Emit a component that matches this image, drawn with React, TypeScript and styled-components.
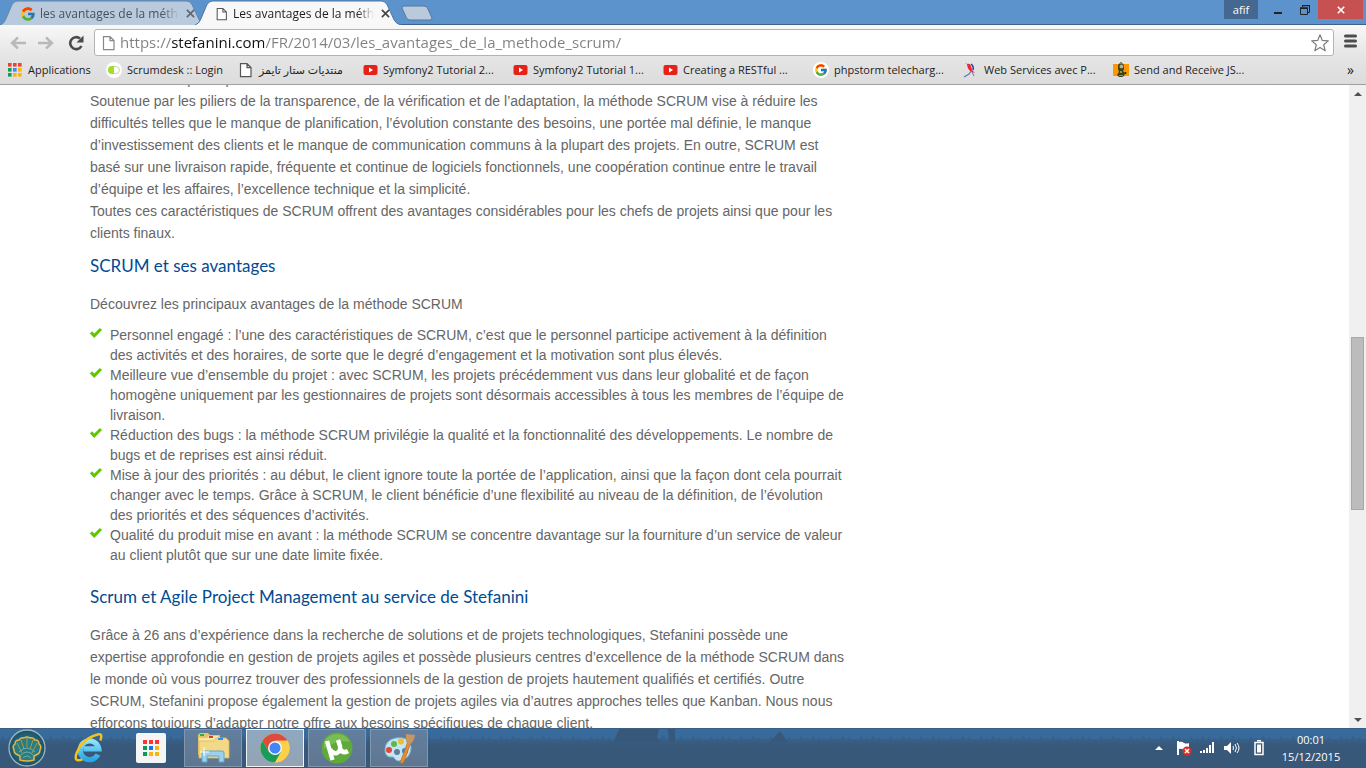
import React from 'react';
import styled, { createGlobalStyle, css } from 'styled-components';
import { FcGoogle } from 'react-icons/fc';

const GlobalStyle = createGlobalStyle`
  * { box-sizing: border-box; }
  html, body, #root { height: 100%; }
  body { margin: 0; overflow: hidden; background: #fff; }
  button { border: 0; padding: 0; background: none; font: inherit; color: inherit; }
`;

const uiFont = '"Open Sans", "Noto Sans", "DejaVu Sans", sans-serif';

const Desktop = styled.div`
  display: flex;
  flex-direction: column;
  height: 100vh;
  font-family: ${uiFont};
  font-size: 11px;
  color: #1c1c1c;
`;

/* ---------- Tab strip ---------- */

const TitleBar = styled.header`
  display: flex;
  justify-content: space-between;
  align-items: flex-start;
  height: 25px;
  background: #5d93cc;
  border-bottom: 1px solid #3d6189;
`;

const TabList = styled.nav`
  display: flex;
  height: 25px;
`;

const Tab = styled.div<{ $active?: boolean }>`
  position: relative;
  display: flex;
  align-items: center;
  gap: 4px;
  width: 206px;
  height: 25px;
  padding: 2px 11px 0 20px;
  margin-right: -11px;
  color: ${p => (p.$active ? '#1c1c1c' : '#46515e')};
  z-index: ${p => (p.$active ? 2 : 1)};
`;

const TabShape = styled.svg`
  position: absolute;
  inset: 0;
  width: 100%;
  height: 100%;
  z-index: -1;
`;

const TabTitle = styled.button`
  flex: 1;
  overflow: hidden;
  white-space: nowrap;
  text-align: left;
  font-size: 12px;
  line-height: 20px;
  mask-image: linear-gradient(90deg, #000 88%, transparent);
`;

const TabClose = styled.button`
  display: flex;
  width: 12px;
  height: 10px;
  justify-content: flex-end;
`;

const NewTab = styled.button`
  display: flex;
  margin: 5px 0 0 11px;
`;

const WindowControls = styled.div`
  display: flex;
  align-items: flex-start;
  padding-right: 3px;
`;

const UserBadge = styled.button`
  width: 34px;
  height: 19px;
  margin-right: 6px;
  background: #44688f;
  color: #fff;
  line-height: 18px;
`;

const WindowButton = styled.button<{ $close?: boolean }>`
  display: flex;
  align-items: center;
  justify-content: center;
  width: ${p => (p.$close ? 45 : 27)}px;
  height: 19px;
  background: ${p => (p.$close ? '#c75050' : 'transparent')};
`;

/* ---------- Toolbar and bookmarks ---------- */

const ChromeBars = styled.div`
  height: 60px;
  background: linear-gradient(#f8f8f8, #e6e6e6 50%, #dcdcdc);
  border-bottom: 1px solid #a0a0a0;
`;

const Toolbar = styled.div`
  display: flex;
  align-items: center;
  height: 33px;
  padding: 2px 9px 0 10px;
`;

const NavButton = styled.button`
  display: flex;
  width: 28px;
`;

const AddressBox = styled.label`
  display: flex;
  align-items: center;
  flex: 1;
  gap: 3px;
  height: 27px;
  margin-right: 10px;
  padding: 0 4px 0 6px;
  background: #fff;
  border: 1px solid #b3b3b3;
  border-radius: 3px;
`;

const AddressInput = styled.input`
  flex: 1;
  min-width: 0;
  height: 24px;
  padding: 0 0 2px;
  border: 0;
  outline: 0;
  font-family: ${uiFont};
  font-size: 15px;
  color: transparent;
  background: linear-gradient(90deg, #808080 51px, #111 51px, #111 144px, #808080 144px);
  background-clip: text;
  -webkit-background-clip: text;
`;

const BookmarkBar = styled.nav`
  display: flex;
  align-items: center;
  height: 24px;
  padding: 0 12px 0 7px;
`;

const Bookmark = styled.a<{ $width: number }>`
  display: flex;
  align-items: center;
  gap: 5px;
  width: ${p => p.$width}px;
  white-space: nowrap;
  line-height: 16px;
  color: inherit;
  text-decoration: none;
`;

const MoreBookmarks = styled.button`
  margin-left: auto;
  font-size: 14px;
  line-height: 16px;
`;

/* ---------- Page ---------- */

const Viewport = styled.div`
  display: flex;
  flex: 1;
  min-height: 0;
  background: #fff;
`;

const PageArea = styled.main`
  flex: 1;
  overflow: hidden;
  padding-left: 90px;
`;

const Article = styled.article`
  max-width: 756px;
  margin-top: -17px;
  font-family: "Liberation Sans", Arial, sans-serif;
  font-size: 14px;
  color: #666;
`;

const Paragraph = styled.p`
  margin: 0;
  line-height: 22px;
`;

const Heading = styled.h2<{ $afterList?: boolean }>`
  margin: ${p => (p.$afterList ? 20 : 10)}px 0 16px;
  font-family: Lato, "Open Sans", sans-serif;
  font-weight: 400;
  font-size: 17px;
  line-height: 23px;
  color: #004b93;
`;

const Benefits = styled.ul`
  list-style: none;
  margin: 10px 0 0;
  padding: 0;
  line-height: 20px;
`;

const Benefit = styled.li`
  display: flex;
  gap: 8px;
  svg { flex: none; margin-top: 2px; }
`;

const ScrollBar = styled.div`
  display: flex;
  flex-direction: column;
  width: 17px;
  padding: 0 2px;
  background: #f0f0f0;
`;

const ScrollArrow = styled.button`
  display: flex;
  align-items: center;
  justify-content: center;
  height: 17px;
`;

const TrackPart = styled.div<{ $share: number; $thumb?: boolean }>`
  flex: ${p => p.$share} 1 0;
  ${p => p.$thumb && css`
    background: #bcbcbc;
    border: 1px solid #a8a8a8;
  `}
`;

/* ---------- Taskbar ---------- */

const Taskbar = styled.footer`
  position: relative;
  display: flex;
  align-items: center;
  height: 40px;
  background: #375879;
  overflow: hidden;
`;

const Scenery = styled.svg`
  position: absolute;
  inset: 0;
  width: 100%;
  height: 100%;
`;

const Launchers = styled.div`
  position: relative;
  display: flex;
  gap: 4px;
`;

const Launcher = styled.button<{ $state?: 'open' | 'active' }>`
  display: flex;
  align-items: center;
  justify-content: center;
  width: 58px;
  height: 38px;
  border: 1px solid transparent;
  ${p => p.$state === 'open' && css`
    background: linear-gradient(#627f9f, #5f7690);
    border-color: #8297ad;
  `}
  ${p => p.$state === 'active' && css`
    background: linear-gradient(#8fa8c0, #94a3b4);
    border-color: #f0f3f6;
  `}
`;

const Start = styled(Launcher)`
  width: 54px;
  margin-right: 2px;
`;

const Tray = styled.div`
  position: relative;
  display: flex;
  align-items: center;
  margin-left: auto;
  padding-right: 25px;
`;

const TrayButton = styled.button<{ $width: number }>`
  display: flex;
  width: ${p => p.$width}px;
`;

const Clock = styled.time`
  display: flex;
  flex-direction: column;
  align-items: center;
  width: 60px;
  color: #fff;
  line-height: 17px;
`;

/* ---------- Drawings ---------- */

const PageIcon = ({ color = '#555', w = 16 }: { color?: string; w?: number }) => (
  <svg width={w} height="16" viewBox="0 0 16 16" fill="#fff" stroke={color} strokeWidth="1.2">
    <path d="M2.500 1.600h6.500l4 4v9H2.500zM9 1.600v4h4" />
  </svg>
);

const AppsIcon = () => {
  const fills = ['#ea4335', '#ea4335', '#ea4335', '#0f9d58', '#4285f4', '#fbb40a', '#0f9d58', '#fbb40a', '#fbb40a'];
  return (
    <svg width="16" height="14" viewBox="-1 0 16 14">
      {fills.map((f, i) => <rect key={i} x={(i % 3) * 5} y={Math.floor(i / 3) * 5} width="3.6" height="3.6" fill={f} />)}
    </svg>
  );
};

const ScrumdeskIcon = () => (
  <svg width="16" height="16" viewBox="0 0 16 16">
    <circle cx="8" cy="8" r="8" fill="#fff" />
    <rect x="2.5" y="4.5" width="11" height="7" rx="3.5" fill="#fff" stroke="#c6d8a0" />
    <path d="M8 4H6a4 4 0 0 0 0 8h2z" fill="#a4dd2b" />
  </svg>
);

const VideoIcon = () => (
  <svg width="15" height="16" viewBox="0 0 15 16">
    <rect x="0.5" y="3" width="14" height="10" rx="2" fill="#e62117" />
    <path d="M6 5.5v5L10 8z" fill="#fff" />
  </svg>
);

const SearchIcon = () => (
  <svg width="16" height="16" viewBox="0 0 16 16">
    <circle cx="8" cy="8" r="8" fill="#fff" />
    <FcGoogle x="1" y="1" width="14" height="14" size={14} />
  </svg>
);

const DancerIcon = () => (
  <svg width="16" height="16" viewBox="0 0 16 16" fill="none">
    <path d="M2 1l4 2" stroke="#b9bce0" />
    <path d="M1 15l5-3 3-4" stroke="#6a70b8" strokeWidth="1.200" />
    <path d="M4 2q3-1 4 2l1 4 3 3-3-1-3-2q-2-3-2-6z" fill="#f0262a" />
    <path d="M8 2q3 2 2 6" stroke="#283a9c" strokeWidth="1.500" />
    <path d="M9 10l2 4" stroke="#6a70b8" />
  </svg>
);

const RobotIcon = () => (
  <svg width="16" height="16" viewBox="0 0 16 16">
    <path d="M0 2h16v12H0z" fill="#ff9800" />
    <path d="M8 0l3 3v4l-1 2 2 2-1 3-2 1H6l-2-2 2-3-1-3V3z" fill="#39401c" />
    <circle cx="8.5" cy="4.5" r="2" fill="#a6b39a" />
    <path d="M7 9h2v2H7zM6 13h4v1H6z" fill="#8aa044" />
    <path d="M8 0l2 2H6z" fill="#5d9c2b" />
    <circle cx="12.500" cy="11" r="1" fill="#222" />
  </svg>
);

const Cross = ({ size, color, width }: { size: number; color: string; width: number }) => (
  <svg width={size} height={size} viewBox="0 0 10 10" stroke={color} strokeWidth={width}>
    <path d="M1 1l8 8M9 1L1 9" />
  </svg>
);

const CheckIcon = () => (
  <svg width="12" height="12" viewBox="0 0 12 12" fill="none" stroke="#5fc700" strokeWidth="3">
    <path d="M1 5.400l3.200 3.400L11 2" />
  </svg>
);

const TabBackground = ({ active }: { active?: boolean }) => (
  <TabShape viewBox="0 0 210 25" preserveAspectRatio="none" aria-hidden="true">
    <path
      d="M0 25Q4 24 6 19L12 5Q14 1 18 1H190Q194 1 196 5L203 20Q205 24 210 25Z"
      fill={active ? '#f8f8f8' : '#b9cadd'}
    />
    <path
      d="M0 25Q4 24 6 19L12 5Q14 1 18 1H190Q194 1 196 5L203 20Q205 24 210 25"
      fill="none"
      stroke={active ? '#4c76a3' : '#6485a9'}
    />
  </TabShape>
);

const ShellIcon = () => (
  <svg width="38" height="38" viewBox="0 0 38 38">
    <defs>
      <radialGradient id="orb"><stop offset="0" stopColor="#2f8f98" /><stop offset="1" stopColor="#1d4f68" /></radialGradient>
    </defs>
    <circle cx="19" cy="19" r="18" fill="url(#orb)" stroke="#9db5bd" strokeWidth="1.3" />
    <path
      d="M12 31v-4l-4-2q-2-1-2-4-2-4 1-6 0-4 4-4 2-3 5-2 3-2 6 0 3-1 5 2 4 0 4 4 3 2 1 6 0 3-2 4l-4 2v4q-7 2-14 0z"
      fill="#2b7c80" stroke="#e9b544" strokeWidth="1.500"
    />
    <path d="M14 24L9 14M16 20l-3-9M19 18V9M22 20l3-9M24 24l5-10" stroke="#c8a14a" strokeWidth="0.8" />
    <path d="M13 26q6-6 12 0M11 23q8-8 16 0M15 29q4-4 8 0" fill="none" stroke="#7fb9b2" strokeWidth="0.8" />
  </svg>
);

const ExplorerIcon = () => (
  <svg width="32" height="32" viewBox="0 0 34 34" fill="none">
    <defs>
      <linearGradient id="ie" x1="0" y1="0" x2="0" y2="1"><stop offset="0" stopColor="#8fe3fb" /><stop offset="1" stopColor="#28a6e6" /></linearGradient>
    </defs>
    <path d="M26.500 24A10 10 0 1 1 27.500 18H11" stroke="url(#ie)" strokeWidth="5.500" />
    <path d="M29 9Q33-1 22 4 9 9 4 22 0 33 10 29" stroke="#f6c21b" strokeWidth="2.600" />
  </svg>
);

const AppsTile = () => (
  <svg width="30" height="30" viewBox="0 0 30 30">
    <rect width="30" height="30" rx="2" fill="#f5f5f5" />
    {['#f33', '#f33', '#f33', '#0b9a58', '#1a73e8', '#fbb40a', '#0b9a58', '#fbb40a', '#fbb40a'].map((f, i) => (
      <rect key={i} x={7 + (i % 3) * 6} y={7 + Math.floor(i / 3) * 6} width="4" height="4" fill={f} />
    ))}
  </svg>
);

const FolderIcon = () => (
  <svg width="34" height="32" viewBox="0 0 34 32">
    <path d="M2 3l2-2h8l2 2h10v20H2z" fill="#e5c368" />
    <path d="M4 2h4v2H4z" fill="#2eac3c" />
    <path d="M3 6h8l2-2h9l2 3v16H3z" fill="#f8e6a4" />
    <path d="M13 4h4v2h-4z" fill="#db3a32" />
    <path d="M3 9h15l2-3h10l3 3v17H3z" fill="#f3d985" stroke="#dbb95c" strokeWidth="0.8" />
    <path d="M22 6h5v2h-5z" fill="#348ee6" />
    <path d="M6 30V21q0-2 2-2h18q2 0 2 2v9h-5v-6H11v6z" fill="#9bd1ef" stroke="#5da7d2" />
    <path d="M8 15v9M4 20h9" stroke="#fff" strokeWidth="1" />
  </svg>
);

const BrowserIcon = () => (
  <svg width="30" height="30" viewBox="0 0 30 30">
    <circle cx="15" cy="15" r="14.500" fill="#f9cc3f" />
    <path d="M2.500 7.700A14.500 14.500 0 0 1 27.600 7.700H15L8.700 18.600z" fill="#dd4b3e" />
    <path d="M2.500 7.700A14.500 14.500 0 0 0 15 29.500L21.300 18.600 15 15 8.700 18.600z" fill="#179c5a" />
    <path d="M15 29.500L21.300 18.600 15 7.700H27.600A14.500 14.500 0 0 1 15 29.500z" fill="#fcd04b" />
    <circle cx="15" cy="15" r="7" fill="#f4f6f8" />
    <circle cx="15" cy="15" r="5.500" fill="#4285f4" />
  </svg>
);

const TorrentIcon = () => (
  <svg width="32" height="32" viewBox="0 0 32 32" fill="none">
    <circle cx="16" cy="16" r="15.500" fill="#5faa3b" />
    <path d="M3 10A14.500 14.500 0 0 1 29 10Q16 7 3 17z" fill="#79bd55" />
    <path d="M6 9l5.500 19M9 17q2 5 7 4 4-2 3-7l-2-6M19 17q3 5 8 2" stroke="#fff" strokeWidth="4.400" />
  </svg>
);

const PaintIcon = () => (
  <svg width="32" height="32" viewBox="0 0 32 32">
    <path d="M2 18Q2 8 13 6q13-2 15 9 0 8-6 12-7 4-10 0-1-3-5-2-5-1-5-7z" fill="#c5e4f4" stroke="#7cb8dc" />
    <circle cx="14" cy="20" r="3" fill="#607c96" />
    <circle cx="6" cy="18" r="3" fill="#e1463b" />
    <circle cx="11" cy="12" r="3" fill="#5bb947" />
    <circle cx="18" cy="9.500" r="3" fill="#f3bd26" />
    <circle cx="22" cy="19" r="3" fill="#3487d4" />
    <path d="M17 31l8-22 3 1-7 20q-2 3-4 1z" fill="#e88d2e" stroke="#ae5f1c" strokeWidth="0.6" />
    <path d="M23 2l9 1q-1 7-5 9l-4-2z" fill="#c79661" />
  </svg>
);

const blades = Array.from({ length: 230 }, (_, i) => `L${i * 6 + 3} ${7 + ((i * 7) % 5)}L${i * 6 + 6} ${12 + ((i * 3) % 3)}`).join('');

const TaskbarScenery = () => (
  <Scenery viewBox="0 0 1366 40" preserveAspectRatio="none" aria-hidden="true">
    <defs>
      <linearGradient id="sky" x1="0" y1="0" x2="0" y2="1"><stop offset="0" stopColor="#376c9e" /><stop offset="1" stopColor="#386896" /></linearGradient>
      <linearGradient id="ground" x1="0" y1="0" x2="0" y2="1"><stop offset="0" stopColor="#375879" stopOpacity="0" /><stop offset="1" stopColor="#375879" /></linearGradient>
    </defs>
    <rect width="1366" height="20" fill="url(#sky)" />
    <path d={`M0 40V12${blades}V40Z`} fill="#375879" opacity="0.4" />
    <rect y="10" width="1366" height="8" fill="url(#ground)" />
    <rect y="18" width="1366" height="22" fill="#375879" />
    <path d="M614 14Q616 6 620 0H659L657 10 662 14ZM667 0H675V14H670ZM770 14L780 3 788 14Z" fill="#375879" />
    <rect width="1366" height="1" fill="#3b5f83" />
  </Scenery>
);

/* ---------- Content ---------- */

const bookmarks: { label: string; width: number; icon: React.ReactNode }[] = [
  { label: 'Applications', width: 99, icon: <AppsIcon /> },
  { label: 'Scrumdesk :: Login', width: 132, icon: <ScrumdeskIcon /> },
  { label: 'منتديات ستار تايمز', width: 125, icon: <PageIcon /> },
  { label: 'Symfony2 Tutorial 2...', width: 150, icon: <VideoIcon /> },
  { label: 'Symfony2 Tutorial 1...', width: 150, icon: <VideoIcon /> },
  { label: 'Creating a RESTful ...', width: 150, icon: <VideoIcon /> },
  { label: 'phpstorm telecharg...', width: 150, icon: <SearchIcon /> },
  { label: 'Web Services avec P...', width: 150, icon: <DancerIcon /> },
  { label: 'Send and Receive JS...', width: 150, icon: <RobotIcon /> },
];

const benefits = [
  'Personnel engagé : l’une des caractéristiques de SCRUM, c’est que le personnel participe activement à la définition des activités et des horaires, de sorte que le degré d’engagement et la motivation sont plus élevés.',
  'Meilleure vue d’ensemble du projet : avec SCRUM, les projets précédemment vus dans leur globalité et de façon homogène uniquement par les gestionnaires de projets sont désormais accessibles à tous les membres de l’équipe de livraison.',
  'Réduction des bugs : la méthode SCRUM privilégie la qualité et la fonctionnalité des développements. Le nombre de bugs et de reprises est ainsi réduit.',
  'Mise à jour des priorités : au début, le client ignore toute la portée de l’application, ainsi que la façon dont cela pourrait changer avec le temps. Grâce à SCRUM, le client bénéficie d’une flexibilité au niveau de la définition, de l’évolution des priorités et des séquences d’activités.',
  'Qualité du produit mise en avant : la méthode SCRUM se concentre davantage sur la fourniture d’un service de valeur au client plutôt que sur une date limite fixée.',
];

export default function App() {
  return (
    <Desktop>
      <GlobalStyle />
      <TitleBar>
        <TabList aria-label="Onglets">
          <Tab>
            <TabBackground />
            <FcGoogle size={16} />
            <TabTitle>les avantages de la méthode scrum</TabTitle>
            <TabClose aria-label="Fermer"><Cross size={9} color="#5a6675" width={1.8} /></TabClose>
          </Tab>
          <Tab $active>
            <TabBackground active />
            <PageIcon w={14} />
            <TabTitle>Les avantages de la méthode SCRUM</TabTitle>
            <TabClose aria-label="Fermer"><Cross size={9} color="#444" width={1.8} /></TabClose>
          </Tab>
          <NewTab aria-label="Nouvel onglet">
            <svg width="32" height="16" viewBox="0 0 32 16">
              <path d="M3 1H23Q26 1 27 4L31 13Q31 15 29 15H9Q6 15 5 12L1 3Q1 1 3 1Z" fill="#b9cadd" stroke="#5378a1" />
            </svg>
          </NewTab>
        </TabList>
        <WindowControls>
          <UserBadge>afif</UserBadge>
          <WindowButton aria-label="Réduire">
            <svg width="8" height="12" viewBox="0 0 8 12"><path d="M0 8h8v2H0z" fill="#222" /></svg>
          </WindowButton>
          <WindowButton aria-label="Restaurer">
            <svg width="10" height="10" viewBox="0 0 10 10" fill="none" stroke="#222">
              <path d="M2.500 2V.5h7v7H8M.5 3.500h7v6h-7z" /><path d="M0 3h8M2 .5h8" strokeWidth="1.500" />
            </svg>
          </WindowButton>
          <WindowButton $close aria-label="Fermer la fenêtre"><Cross size={8} color="#fff" width={2} /></WindowButton>
        </WindowControls>
      </TitleBar>

      <ChromeBars>
        <Toolbar>
          <NavButton aria-label="Précédent">
            <svg width="16" height="14" viewBox="0 0 16 14" fill="none" stroke="#b9b9b9" strokeWidth="2.400"><path d="M16 7H2M8 1.500L2 7l6 5.500" /></svg>
          </NavButton>
          <NavButton aria-label="Suivant">
            <svg width="16" height="14" viewBox="0 0 16 14" fill="none" stroke="#b9b9b9" strokeWidth="2.400"><path d="M0 7h14M8 1.500L14 7l-6 5.500" /></svg>
          </NavButton>
          <NavButton aria-label="Actualiser">
            <svg width="18" height="16" viewBox="-2 0 18 16">
              <path d="M12 3.500A6 6 0 1 0 13.500 11" fill="none" stroke="#4a4a4a" strokeWidth="2.600" />
              <path d="M15.500 .5v7h-7z" fill="#4a4a4a" />
            </svg>
          </NavButton>
          <AddressBox>
            <PageIcon color="#888" />
            <AddressInput aria-label="Adresse" defaultValue="https://stefanini.com/FR/2014/03/les_avantages_de_la_methode_scrum/" />
            <svg width="18" height="18" viewBox="0 0 18 18" fill="none" stroke="#7d7d7d" strokeWidth="1.200" strokeLinejoin="round">
              <path d="M9 .8l2.300 5.600 6 .5-4.600 3.900 1.500 6L9 13.600l-5.200 3.200 1.500-6L.7 6.900l6-.5z" />
            </svg>
          </AddressBox>
          <button aria-label="Menu">
            <svg width="13" height="14" viewBox="0 0 13 14" stroke="#4d4d4d" strokeWidth="3" strokeLinecap="round"><path d="M1.500 2h10M1.500 7h10M1.500 12h10" /></svg>
          </button>
        </Toolbar>
        <BookmarkBar aria-label="Favoris">
          {bookmarks.map(b => (
            <Bookmark key={b.label} href="#" $width={b.width}>{b.icon}<span>{b.label}</span></Bookmark>
          ))}
          <MoreBookmarks aria-label="Autres favoris">»</MoreBookmarks>
        </BookmarkBar>
      </ChromeBars>

      <Viewport>
        <PageArea>
          <Article>
            <Paragraph>SCRUM est un pacte pour tous.</Paragraph>
            <Paragraph>
              Soutenue par les piliers de la transparence, de la vérification et de l’adaptation, la méthode SCRUM vise à
              réduire les difficultés telles que le manque de planification, l’évolution constante des besoins, une portée
              mal définie, le manque d’investissement des clients et le manque de communication communs à la plupart des
              projets. En outre, SCRUM est basé sur une livraison rapide, fréquente et continue de logiciels fonctionnels,
              une coopération continue entre le travail d’équipe et les affaires, l’excellence technique et la simplicité.
            </Paragraph>
            <Paragraph>
              Toutes ces caractéristiques de SCRUM offrent des avantages considérables pour les chefs de projets ainsi que
              pour les clients finaux.
            </Paragraph>
            <Heading>SCRUM et ses avantages</Heading>
            <Paragraph>Découvrez les principaux avantages de la méthode SCRUM</Paragraph>
            <Benefits>
              {benefits.map(text => (
                <Benefit key={text}><CheckIcon /><span>{text}</span></Benefit>
              ))}
            </Benefits>
            <Heading $afterList>Scrum et Agile Project Management au service de Stefanini</Heading>
            <Paragraph>
              Grâce à 26 ans d’expérience dans la recherche de solutions et de projets technologiques, Stefanini possède
              une expertise approfondie en gestion de projets agiles et possède plusieurs centres d’excellence de la
              méthode SCRUM dans le monde où vous pourrez trouver des professionnels de la gestion de projets hautement
              qualifiés et certifiés. Outre SCRUM, Stefanini propose également la gestion de projets agiles via d’autres
              approches telles que Kanban. Nous nous efforçons toujours d’adapter notre offre aux besoins spécifiques de
              chaque client.
            </Paragraph>
          </Article>
        </PageArea>
        <ScrollBar>
          <ScrollArrow aria-label="Défiler vers le haut">
            <svg width="8" height="4" viewBox="0 0 8 4"><path d="M0 4l4-4 4 4z" fill="#505050" /></svg>
          </ScrollArrow>
          <TrackPart $share={236} />
          <TrackPart $share={171} $thumb />
          <TrackPart $share={202} />
          <ScrollArrow aria-label="Défiler vers le bas">
            <svg width="8" height="4" viewBox="0 0 8 4"><path d="M0 0l4 4 4-4z" fill="#505050" /></svg>
          </ScrollArrow>
        </ScrollBar>
      </Viewport>

      <Taskbar>
        <TaskbarScenery />
        <Launchers>
          <Start aria-label="Démarrer"><ShellIcon /></Start>
          <Launcher aria-label="Internet Explorer"><ExplorerIcon /></Launcher>
          <Launcher aria-label="Applications"><AppsTile /></Launcher>
          <Launcher $state="open" aria-label="Explorateur de fichiers"><FolderIcon /></Launcher>
          <Launcher $state="active" aria-label="Chrome"><BrowserIcon /></Launcher>
          <Launcher $state="open" aria-label="µTorrent"><TorrentIcon /></Launcher>
          <Launcher $state="open" aria-label="Paint"><PaintIcon /></Launcher>
        </Launchers>
        <Tray>
          <TrayButton $width={21} aria-label="Icônes cachées">
            <svg width="8" height="4" viewBox="0 0 8 4"><path d="M0 4l4-4 4 4z" fill="#fff" /></svg>
          </TrayButton>
          <TrayButton $width={24} aria-label="Centre de maintenance">
            <svg width="16" height="16" viewBox="0 0 16 16">
              <path d="M1 1h2v14H1zM3 2q3-1 5 1 3 1 5 0v7q-3 1-5 0-3-2-5-1z" fill="#fff" />
              <circle cx="11" cy="11" r="4.500" fill="#d93025" />
              <path d="M9 9l4 4M13 9l-4 4" stroke="#fff" strokeWidth="1.500" />
            </svg>
          </TrayButton>
          <TrayButton $width={24} aria-label="Réseau">
            <svg width="15" height="14" viewBox="0 0 15 14" fill="#fff"><path d="M0 10h2v2H0zM3 9h2v3H3zM6 7h2v5H6zM9 4h2v8H9zM12 1h2v11h-2z" /></svg>
          </TrayButton>
          <TrayButton $width={30} aria-label="Volume">
            <svg width="16" height="14" viewBox="0 0 16 14" fill="none" stroke="#fff">
              <path d="M0 5h3l4-4v12L3 9H0z" fill="#fff" stroke="none" /><path d="M9 5q1 2 0 4M11 3q3 4 0 8M13 2q4 5 0 10" />
            </svg>
          </TrayButton>
          <TrayButton $width={27} aria-label="Batterie">
            <svg width="10" height="16" viewBox="0 0 10 16" fill="none" stroke="#fff" strokeWidth="1.500">
              <path d="M1 2.500h8v12H1z" /><path d="M3 .8h4" /><path d="M3 4.500h4v8H3z" fill="#fff" stroke="none" />
            </svg>
          </TrayButton>
          <Clock dateTime="2015-12-15T00:01"><span>00:01</span><span>15/12/2015</span></Clock>
        </Tray>
      </Taskbar>
    </Desktop>
  );
}
